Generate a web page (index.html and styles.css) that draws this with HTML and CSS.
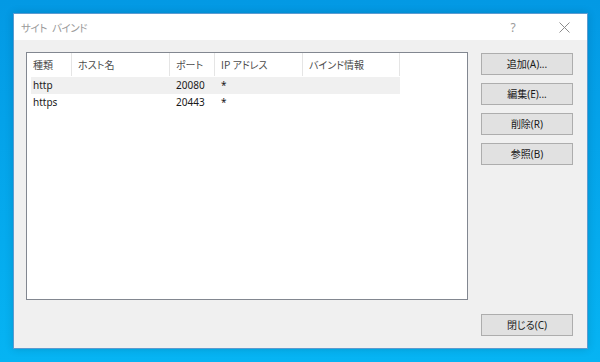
FILE: index.html
```html
<!DOCTYPE html>
<html lang="ja">
<head>
  <meta charset="UTF-8" />
  <title>サイト バインド</title>
  <link rel="stylesheet" href="styles.css">
</head>
<body>

  <div class="dialog">
    <div class="titlebar">
      <span class="title">サイト バインド</span>
      <span class="tb-help">?</span>
      <span class="tb-close">
        <svg width="11" height="11" viewBox="0 0 11 11">
          <path d="M0.5 0.5 L10.5 10.5 M10.5 0.5 L0.5 10.5" stroke="#8c8c8c" stroke-width="1" fill="none" />
        </svg>
      </span>
    </div>

    <div class="content">
      <!-- バインド一覧 -->
      <div class="listview">
        <div class="lv-header">
          <div class="col c1">種類</div>
          <div class="col c2">ホスト名</div>
          <div class="col c3">ポート</div>
          <div class="col c4">IP アドレス</div>
          <div class="col c5">バインド情報</div>
        </div>
        <div class="lv-row selected">
          <div class="cell c1">http</div>
          <div class="cell c2"></div>
          <div class="cell c3">20080</div>
          <div class="cell c4">*</div>
          <div class="cell c5"></div>
        </div>
        <div class="lv-row">
          <div class="cell c1">https</div>
          <div class="cell c2"></div>
          <div class="cell c3">20443</div>
          <div class="cell c4">*</div>
          <div class="cell c5"></div>
        </div>
      </div>

      <div class="side">
        <div class="btn-group">
          <button class="btn">追加(A)...</button>
          <button class="btn">編集(E)...</button>
          <button class="btn">削除(R)</button>
          <button class="btn">参照(B)</button>
        </div>
        <button class="btn">閉じる(C)</button>
      </div>
    </div>
  </div>

</body>
</html>
```

FILE: styles.css
```css
* {
  margin: 0;
  padding: 0;
  box-sizing: border-box;
}

html, body {
  height: 100%;
  overflow: hidden;
}

body {
  background: linear-gradient(#0399e4, #06b4f3);
  font-family: 'Noto Sans', 'Noto Sans CJK JP', sans-serif;
  font-size: 10px;
  font-feature-settings: "palt";
  color: #000;
  padding: 13px 0 0 13px;
}

.dialog {
  width: 575px;
  height: 336px;
  background: #f0f0f0;
  border: 1px solid #5b9bd0;
  box-shadow: 0 0 8px rgba(0, 0, 0, 0.15);
  display: flex;
  flex-direction: column;
}

.titlebar {
  height: 26px;
  background: #fff;
  display: flex;
  align-items: center;
  flex-shrink: 0;
}

.title {
  flex: 1;
  padding-left: 7px;
  color: #9a9a9a;
  font-size: 10.5px;
  letter-spacing: -0.4px;
  word-spacing: 3px;
  font-family: 'Noto Sans CJK JP', sans-serif;
}

.tb-help {
  width: 24px;
  text-align: center;
  color: #9a9a9a;
  font-size: 12px;
  margin-right: 16px;
}

.tb-close {
  width: 46px;
  display: flex;
  justify-content: center;
  align-items: center;
}

.content {
  flex: 1;
  display: flex;
  padding: 12px 14px 12px 12px;
  gap: 13px;
}

.listview {
  width: 442px;
  height: 248px;
  background: #fff;
  border: 1px solid #828790;
}

.lv-header {
  display: flex;
  height: 23px;
  color: #4c4c4c;
}

.col {
  line-height: 23px;
  padding-left: 6px;
  border-right: 1px solid #e5e5e5;
  font-family: 'Noto Sans CJK JP', sans-serif;
  white-space: nowrap;
}

.c1 { width: 45px; }
.c2 { width: 98px; }
.c3 { width: 45px; }
.c4 { width: 88px; }
.c5 { width: 97px; }

.lv-row {
  display: flex;
  height: 17px;
  margin-left: 4px;
  width: 369px;
}

.lv-row .c1 { width: 41px; padding-left: 2px; }

.lv-row.selected {
  background: #f0f0f0;
  margin-top: 1px;
}

.cell {
  line-height: 17px;
  padding-left: 6px;
  white-space: nowrap;
  color: #1a1a1a;
}

.side {
  flex: 1;
  display: flex;
  flex-direction: column;
  justify-content: space-between;
}

.btn-group {
  display: flex;
  flex-direction: column;
  gap: 8px;
  padding-top: 1px;
}

.btn {
  height: 22px;
  width: 92px;
  background: #e1e1e1;
  border: 1px solid #adadad;
  font-family: 'Noto Sans', 'Noto Sans CJK JP', sans-serif;
  font-size: 10px;
  font-feature-settings: "palt";
  color: #1a1a1a;
  line-height: 20px;
}
```
